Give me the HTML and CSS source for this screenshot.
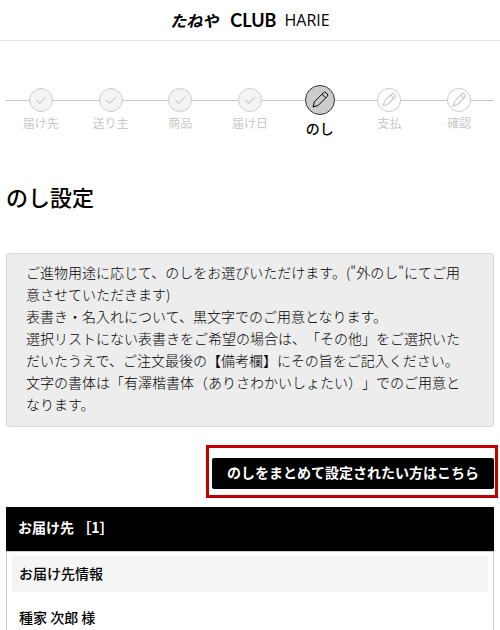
FILE: index.html
```html
<!DOCTYPE html>
<html lang="ja">
<head>
  <meta charset="UTF-8">
  <meta name="viewport" content="width=device-width, initial-scale=1.0">
  <title>のし設定 - たねや CLUB HARIE</title>
  <link rel="stylesheet" href="styles.css">
</head>
<body>

  <svg class="sprite" aria-hidden="true">
    <symbol id="check" viewBox="0 0 24 24">
      <path d="M6.500 12l4 4 7.500-7.500"/>
    </symbol>
    <symbol id="pencil" viewBox="0 0 24 24">
      <path d="M5 19l1.500-5.300 9-9a1.800 1.800 0 0 1 2.500 0l1.200 1.200a1.800 1.800 0 0 1 0 2.500l-9 9z"/>
      <path d="M14 6.200l3.700 3.700"/>
    </symbol>
  </svg>

  <header class="header">
    <a href="#" class="logo">
      <span class="logo-taneya">たねや</span>
      <span class="logo-club">CLUB</span>
      <span class="logo-harie">HARIE</span>
    </a>
  </header>

  <main>
    <ol class="steps">
      <li class="step done">
        <span class="circle"><svg><use href="#check"/></svg></span>
        <span class="label">届け先</span>
      </li>
      <li class="step done">
        <span class="circle"><svg><use href="#check"/></svg></span>
        <span class="label">送り主</span>
      </li>
      <li class="step done">
        <span class="circle"><svg><use href="#check"/></svg></span>
        <span class="label">商品</span>
      </li>
      <li class="step done">
        <span class="circle"><svg><use href="#check"/></svg></span>
        <span class="label">届け日</span>
      </li>
      <li class="step active" aria-current="step">
        <span class="circle"><svg><use href="#pencil"/></svg></span>
        <span class="label">のし</span>
      </li>
      <li class="step">
        <span class="circle"><svg><use href="#pencil"/></svg></span>
        <span class="label">支払</span>
      </li>
      <li class="step">
        <span class="circle"><svg><use href="#pencil"/></svg></span>
        <span class="label">確認</span>
      </li>
    </ol>

    <h1>のし設定</h1>

    <p class="info">
      ご進物用途に応じて、のしをお選びいただけます。("外のし"にてご用意させていただきます)<br>
      表書き・名入れについて、黒文字でのご用意となります。<br>
      選択リストにない表書きをご希望の場合は、「その他」をご選択いただいたうえで、ご注文最後の【備考欄】にその旨をご記入ください。<br>
      文字の書体は「有澤楷書体（ありさわかいしょたい）」でのご用意となります。
    </p>

    <div class="bulk">
      <button type="button" class="bulk-btn">のしをまとめて設定されたい方はこちら</button>
    </div>

    <section class="address">
      <h2>お届け先 ［1］</h2>
      <div class="address-body">
        <h3>お届け先情報</h3>
        <p>種家 次郎 様</p>
      </div>
    </section>
  </main>

</body>
</html>
```
FILE: styles.css
```css
* { box-sizing: border-box; }

body {
  margin: 0;
  font-family: "Noto Sans CJK JP", sans-serif;
  font-size: 14px;
  line-height: 22px;
  text-spacing-trim: space-all;
  color: #000;
  background-color: #fff;
}

.sprite {
  display: none;
}

/* Header */
.header {
  display: flex;
  justify-content: center;
  align-items: center;
  height: 41px;
  border-bottom: 1px solid #e5e5e5;
}

.logo {
  display: flex;
  align-items: center;
  color: #000;
  text-decoration: none;
  font-size: 16px;
  font-weight: bold;
}

.logo-taneya {
  font-style: italic;
}

.logo-club {
  margin-left: 12px;
  font-family: Lato, sans-serif;
  font-size: 18px;
}

.logo-harie {
  margin-left: 8px;
  font-family: "Open Sans", sans-serif;
  font-weight: 500;
}

main {
  padding: 0 6px;
}

/* Steps */
.steps {
  position: relative;
  display: flex;
  margin: 44px 0 0;
  padding: 0;
  list-style: none;
}

.steps::before {
  content: "";
  position: absolute;
  top: 15px;
  left: 0;
  right: 0;
  border-top: 1px solid #c8c8c8;
}

.step {
  position: relative;
  flex: 1;
  display: flex;
  flex-direction: column;
  align-items: center;
  padding-top: 3px;
  color: #c8c8c8;
  font-size: 12px;
}

.circle {
  display: flex;
  justify-content: center;
  align-items: center;
  width: 24px;
  height: 24px;
  border: 1px solid #ccc;
  border-radius: 50%;
  background-color: #fff;
}

.circle svg {
  flex: none;
  width: 20px;
  height: 20px;
  fill: none;
  stroke: currentColor;
  stroke-width: 1.3;
}

.done .circle {
  background-color: #f4f4f4;
}

.active {
  padding-top: 0;
  color: #000;
  font-size: 14px;
  font-weight: 500;
}

.active .circle {
  width: 30px;
  height: 30px;
  border-color: #333;
  background-color: #ccc;
}

.active .circle svg {
  width: 24px;
  height: 24px;
  stroke-width: 1;
}

.active .label {
  margin-top: 2px;
}

h1 {
  margin: 41px 0;
  font-size: 22px;
  font-weight: 500;
  line-height: 32px;
}

.info {
  margin: 0;
  padding: 7px 23px 11px 19px;
  border: 1px solid #d8d8d8;
  border-radius: 3px;
  background-color: #ededed;
  font-weight: 300;
}

/* Bulk setting button */
.bulk {
  position: relative;
  width: fit-content;
  margin: 31px 0 18px auto;
}

.bulk::after {
  content: "";
  position: absolute;
  inset: -13px -4px -9px -6px;
  border: 3px solid #c00000;
  pointer-events: none;
}

.bulk-btn {
  display: block;
  height: 31px;
  padding: 0 15px 4px;
  border: 0;
  border-radius: 2px;
  background-color: #000;
  color: #fff;
  font: inherit;
  font-weight: bold;
  text-spacing-trim: inherit;
  cursor: pointer;
}

/* Delivery address */
.address h2 {
  margin: 0;
  padding: 9px 12px 13px;
  background-color: #000;
  color: #fff;
  font-size: 14px;
  font-weight: bold;
}

.address-body {
  padding: 4px 5px;
  border: 1px solid #ccc;
}

.address-body h3 {
  margin: 0;
  padding: 6px 7px 8px;
  background-color: #f5f5f5;
  font-size: 14px;
  font-weight: 500;
}

.address-body p {
  margin: 0;
  padding: 14px 7px;
  font-weight: 500;
}
```
